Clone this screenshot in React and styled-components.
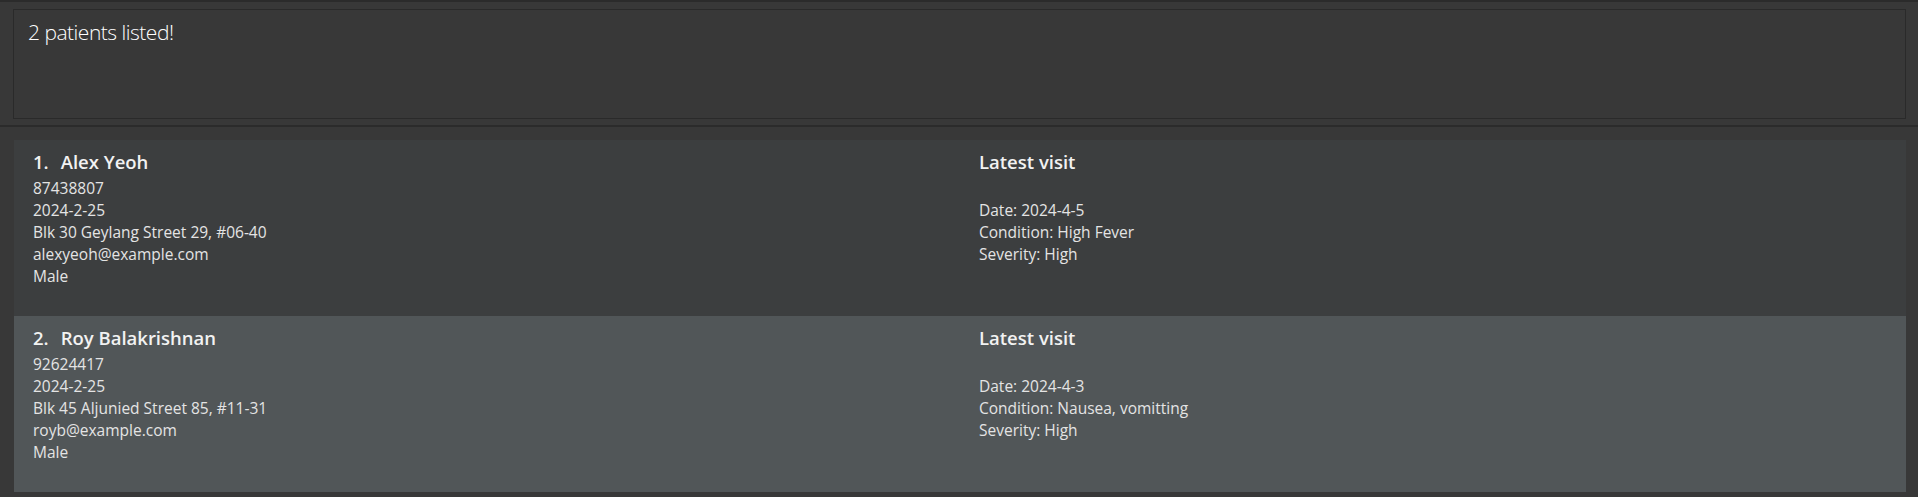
import styled, { createGlobalStyle } from 'styled-components'

const GlobalStyle = createGlobalStyle`
  html, body {
    margin: 0;
    padding: 0;
    background-color: #383838;
  }
  * {
    box-sizing: border-box;
  }
`

const Page = styled.div`
  display: flex;
  flex-direction: column;
  height: 497px;
  border-top: 2px solid #2b2b2b;
  font-family: "Open Sans", "Noto Sans", sans-serif;
`

const ResultPane = styled.div`
  padding: 7px 12px 6px 13px;
  border-bottom: 2px solid #2b2b2b;
`

const ResultBox = styled.div`
  height: 110px;
  border: 1px solid #2a2a2a;
  background-color: #383838;
  padding: 8px 14px;
  color: #ffffff;
  font-size: 21px;
  font-weight: 300;
  letter-spacing: -0.5px;
`

const ListPane = styled.ul`
  flex: 1;
  margin: 0;
  padding: 13px 12px 0 14px;
  list-style-type: none;
`

const Card = styled.li`
  display: grid;
  grid-template-columns: 1fr 1fr;
  height: 176px;
  padding-top: 9px;
  background-color: ${({ odd }) => (odd ? '#515658' : '#3c3e3f')};
`

const Column = styled.div`
  display: flex;
  flex-direction: column;
  padding-left: 19px;
`

const Heading = styled.div`
  display: flex;
  gap: 12px;
  height: 28px;
  font-size: 18.5px;
  font-weight: 600;
  color: #f2f2f2;
`

const Line = styled.div`
  height: 22px;
  line-height: 22px;
  font-size: 15.5px;
  color: #e4e4e4;
`

const patients = [
  {
    name: 'Alex Yeoh',
    phone: '87438807',
    date: '2024-2-25',
    address: 'Blk 30 Geylang Street 29, #06-40',
    email: 'alexyeoh@example.com',
    gender: 'Male',
    visit: { date: '2024-4-5', condition: 'High Fever', severity: 'High' },
  },
  {
    name: 'Roy Balakrishnan',
    phone: '92624417',
    date: '2024-2-25',
    address: 'Blk 45 Aljunied Street 85, #11-31',
    email: 'royb@example.com',
    gender: 'Male',
    visit: { date: '2024-4-3', condition: 'Nausea, vomitting', severity: 'High' },
  },
]

const App = () => (
  <>
    <GlobalStyle />
    <Page>
      <ResultPane>
        <ResultBox>{patients.length} patients listed!</ResultBox>
      </ResultPane>
      <ListPane>
        {patients.map((p, i) => (
          <Card key={i} odd={i % 2 === 1}>
            <Column>
              <Heading>
                <span>{i + 1}.</span>
                <span>{p.name}</span>
              </Heading>
              <Line>{p.phone}</Line>
              <Line>{p.date}</Line>
              <Line>{p.address}</Line>
              <Line>{p.email}</Line>
              <Line>{p.gender}</Line>
            </Column>
            <Column>
              <Heading>Latest visit</Heading>
              <Line />
              <Line>Date: {p.visit.date}</Line>
              <Line>Condition: {p.visit.condition}</Line>
              <Line>Severity: {p.visit.severity}</Line>
            </Column>
          </Card>
        ))}
      </ListPane>
    </Page>
  </>
)

export default App
